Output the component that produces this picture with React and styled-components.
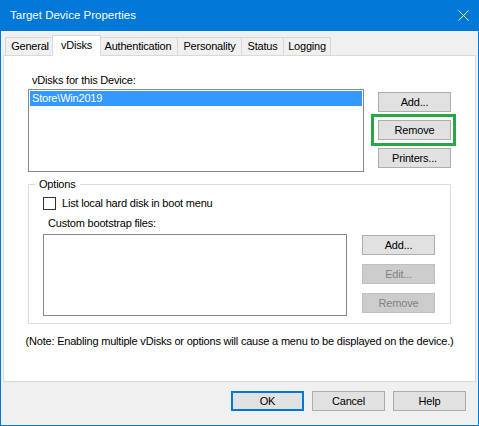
import React from 'react';
import styled, { createGlobalStyle, css } from 'styled-components';

const GlobalStyle = createGlobalStyle`
  html, body {
    margin: 0;
    padding: 0;
    background: #ffffff;
  }
  * {
    box-sizing: border-box;
  }
`;

const Window = styled.div`
  width: 479px;
  height: 426px;
  display: flex;
  flex-direction: column;
  background: #f0f0f0;
  border: 1px solid #0078d7;
  border-top: 0;
  color: #000;
  font-family: "Liberation Sans", Arial, sans-serif;
  font-size: 11px;
  line-height: 13px;
  letter-spacing: -0.2px;
`;

const TitleBar = styled.div`
  height: 31px;
  flex: none;
  display: flex;
  align-items: center;
  justify-content: space-between;
  padding-left: 9px;
  background: #0078d7;
  color: #fff;
  font-size: 11.5px;
  letter-spacing: 0;
`;

const CloseButton = styled.div`
  width: 30px;
  height: 31px;
  display: flex;
  align-items: center;
  justify-content: center;
`;

const TabRow = styled.div`
  position: relative;
  z-index: 1;
  height: 20px;
  flex: none;
  display: flex;
  align-items: flex-start;
  margin-top: 4px;
  padding-left: 4px;
`;

const Tab = styled.div`
  position: relative;
  width: ${p => p.$w}px;
  height: 18px;
  margin-top: 2px;
  margin-right: -1px;
  padding-top: 2px;
  text-align: center;
  background: #f0f0f0;
  border: 1px solid #d9d9d9;
  border-bottom: 0;
  white-space: nowrap;

  ${p => p.$active && css`
    z-index: 2;
    width: ${p.$w + 4}px;
    height: 21px;
    margin: 0 -3px 0 -2px;
    padding-top: 3px;
    background: #fff;
  `}
`;

const Panel = styled.div`
  height: 327px;
  flex: none;
  margin: 0 2px;
  display: flex;
  flex-direction: column;
  padding: 18px 24px 0;
  background: #fff;
  border: 1px solid #d9d9d9;
`;

const Label = styled.div`
  height: 13px;
  margin-left: ${p => p.$indent || 0}px;
  margin-top: ${p => p.$top || 0}px;
  white-space: nowrap;
`;

const Row = styled.div`
  display: flex;
  align-items: flex-start;
  gap: ${p => p.$gap}px;
  margin-top: ${p => p.$top || 0}px;
`;

const ListBox = styled.div`
  width: ${p => p.$w}px;
  height: ${p => p.$h}px;
  flex: none;
  padding: 1px;
  background: #fff;
  border: 1px solid #828790;
`;

const ListItem = styled.div`
  height: 15px;
  padding: 1px 2px;
  white-space: nowrap;
  ${p => p.$selected && css`
    background: #3399ff;
    color: #fff;
  `}
`;

const ButtonColumn = styled.div`
  display: flex;
  flex-direction: column;
  gap: ${p => p.$gap}px;
  margin-top: ${p => p.$top || 0}px;
`;

const Button = styled.div`
  width: 73px;
  height: 20px;
  flex: none;
  display: flex;
  align-items: center;
  justify-content: center;
  background: #e1e1e1;
  border: 1px solid #adadad;
  white-space: nowrap;

  ${p => p.$default && css`
    border: 2px solid #0078d7;
  `}

  ${p => p.$disabled && css`
    background: #cccccc;
    border-color: #bfbfbf;
    color: #838383;
  `}
`;

const Highlight = styled.div`
  position: relative;

  &::after {
    content: '';
    position: absolute;
    top: -6px;
    bottom: -6px;
    left: -7px;
    right: -5px;
    border: 3px solid #27a844;
    pointer-events: none;
  }
`;

const GroupBox = styled.fieldset`
  min-width: 0;
  margin: 6px 0 0;
  padding: 6px 15px 7px 14px;
  border: 1px solid #dcdcdc;
`;

const Legend = styled.legend`
  margin-left: -8px;
  padding: 0 4px;
  line-height: 13px;
`;

const CheckRow = styled.div`
  display: flex;
  align-items: center;
  gap: 6px;
  height: 13px;
`;

const CheckBox = styled.div`
  width: 13px;
  height: 13px;
  background: #fff;
  border: 1px solid #333333;
`;

const Note = styled.div`
  margin: 11px -24px 0;
  text-align: center;
  white-space: nowrap;
`;

const Footer = styled.div`
  display: flex;
  justify-content: flex-end;
  gap: 8px;
  padding: 9px 12px 0 0;
`;

const tabs = [
  { name: 'General', w: 50 },
  { name: 'vDisks', w: 45, active: true },
  { name: 'Authentication', w: 80 },
  { name: 'Personality', w: 65 },
  { name: 'Status', w: 43 },
  { name: 'Logging', w: 48 },
];

export default function App() {
  return (
    <>
      <GlobalStyle />
      <Window>
        <TitleBar>
          <span>Target Device Properties</span>
          <CloseButton>
            <svg width="11" height="11" viewBox="0 0 11 11">
              <path d="M0.5 0.5 L10.5 10.5 M10.5 0.5 L0.5 10.5" stroke="#fff" strokeWidth="1" />
            </svg>
          </CloseButton>
        </TitleBar>

        <TabRow>
          {tabs.map(t => (
            <Tab key={t.name} $w={t.w} $active={t.active}>{t.name}</Tab>
          ))}
        </TabRow>

        <Panel>
          <Label $indent={4}>vDisks for this Device:</Label>
          <Row $gap={14} $top={2}>
            <ListBox $w={336} $h={83}>
              <ListItem $selected>{'Store\\Win2019'}</ListItem>
            </ListBox>
            <ButtonColumn $gap={8} $top={3}>
              <Button>Add...</Button>
              <Highlight>
                <Button>Remove</Button>
              </Highlight>
              <Button>Printers...</Button>
            </ButtonColumn>
          </Row>

          <GroupBox>
            <Legend>Options</Legend>
            <CheckRow>
              <CheckBox />
              <span>List local hard disk in boot menu</span>
            </CheckRow>
            <Label $indent={5} $top={7}>Custom bootstrap files:</Label>
            <Row $gap={15} $top={4}>
              <ListBox $w={304} $h={82} />
              <ButtonColumn $gap={9} $top={1}>
                <Button>Add...</Button>
                <Button $disabled>Edit...</Button>
                <Button $disabled>Remove</Button>
              </ButtonColumn>
            </Row>
          </GroupBox>

          <Note>(Note: Enabling multiple vDisks or options will cause a menu to be displayed on the device.)</Note>
        </Panel>

        <Footer>
          <Button $default>OK</Button>
          <Button>Cancel</Button>
          <Button>Help</Button>
        </Footer>
      </Window>
    </>
  );
}
